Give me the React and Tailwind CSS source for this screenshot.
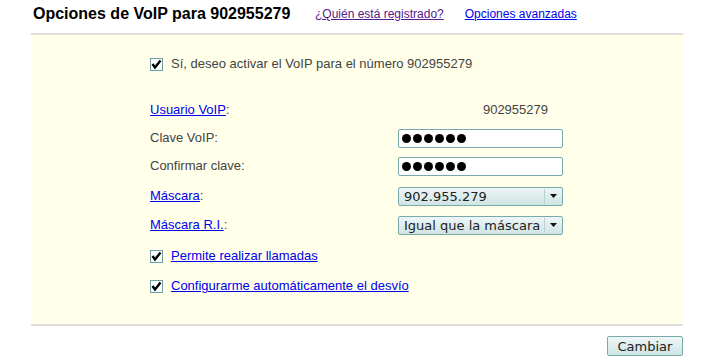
import React from 'react';

const Check = () => (
  <span className="inline-flex w-[13px] h-[13px] border border-[#6f9fa3] bg-white items-center justify-center shrink-0">
    <svg width="11" height="11" viewBox="0 0 11 11">
      <path d="M1.5 5 L4 8.5 L9.5 1.5" fill="none" stroke="#000" strokeWidth="2.4" />
    </svg>
  </span>
);

const Dots = () => (
  <div className="flex items-center gap-[2px] pl-[3px]">
    {[0, 1, 2, 3, 4, 5].map((i) => (
      <span key={i} className="w-[9px] h-[9px] rounded-full bg-black" />
    ))}
  </div>
);

const Select = ({ value }) => (
  <div className="flex items-center w-[165px] h-[19px] border border-[#7aa9ab] rounded-[2px] bg-gradient-to-b from-[#eef6f6] to-[#cfe4e4] font-['DejaVu_Sans',sans-serif] text-[13px] text-[#222]">
    <span className="flex-1 pl-[5px] leading-none whitespace-nowrap">{value}</span>
    <span className="w-px h-[15px] bg-[#b9d0d0]" />
    <span className="w-[17px] flex justify-center">
      <svg width="7" height="4" viewBox="0 0 7 4"><path d="M0 0 H7 L3.5 4 Z" fill="#111" /></svg>
    </span>
  </div>
);

const Row = ({ label, children, className }) => (
  <div className={`flex items-center h-[20px] ${className}`}>
    <div className="w-[248px]">{label}</div>
    {children}
  </div>
);

const A = ({ children }) => <a href="#" className="text-[#0000ee] underline">{children}</a>;

export default function App() {
  return (
    <div className="w-[718px] h-[364px] bg-white font-['Liberation_Sans',Arial,sans-serif] text-[13px] text-[#444]">
      <div className="flex items-center h-[33px] pl-[33px] pb-[5px]">
        <h1 className="text-[16px] font-bold text-black w-[282px]">Opciones de VoIP para 902955279</h1>
        <a href="#" className="text-[12px] text-[#551a8b] underline">¿Quién está registrado?</a>
        <a href="#" className="text-[12px] text-[#0000ee] underline ml-[21px]">Opciones avanzadas</a>
      </div>
      <div className="ml-[31px] w-[652px] h-[293px] border-t-2 border-b-2 border-[#dedede] bg-[#ffffea] pl-[119px] pt-[19px]">
        <div className="flex items-center h-[20px] gap-[8px]">
          <Check />
          <span>Sí, deseo activar el VoIP para el número 902955279</span>
        </div>
        <Row className="mt-[26px]" label={<><A>Usuario VoIP</A>:</>}>
          <span className="w-[150px] text-right">902955279</span>
        </Row>
        <Row className="mt-[8px]" label="Clave VoIP:">
          <div className="flex items-center w-[165px] h-[19px] border border-[#7aa9ab] rounded-[2px] bg-white"><Dots /></div>
        </Row>
        <Row className="mt-[8px]" label="Confirmar clave:">
          <div className="flex items-center w-[165px] h-[19px] border border-[#7aa9ab] rounded-[2px] bg-white"><Dots /></div>
        </Row>
        <Row className="mt-[10px]" label={<><A>Máscara</A>:</>}>
          <Select value="902.955.279" />
        </Row>
        <Row className="mt-[9px]" label={<><A>Máscara R.I.</A>:</>}>
          <Select value="Igual que la máscara" />
        </Row>
        <div className="flex items-center h-[20px] gap-[8px] mt-[11px]">
          <Check />
          <A>Permite realizar llamadas</A>
        </div>
        <div className="flex items-center h-[20px] gap-[8px] mt-[10px]">
          <Check />
          <A>Configurarme automáticamente el desvío</A>
        </div>
      </div>
      <div className="flex justify-end w-[683px] mt-[10px]">
        <button className="w-[76px] h-[20px] border border-[#7aa9ab] rounded-[2px] bg-gradient-to-b from-[#eef6f6] to-[#cfe4e4] font-['DejaVu_Sans',sans-serif] text-[13px] text-[#222] leading-none">Cambiar</button>
      </div>
    </div>
  );
}
